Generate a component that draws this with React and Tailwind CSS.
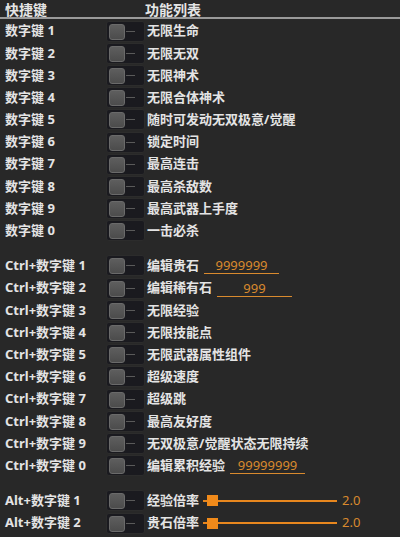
const groups = [
  [
    ["数字键 1", "无限生命"],
    ["数字键 2", "无限无双"],
    ["数字键 3", "无限神术"],
    ["数字键 4", "无限合体神术"],
    ["数字键 5", "随时可发动无双极意/觉醒"],
    ["数字键 6", "锁定时间"],
    ["数字键 7", "最高连击"],
    ["数字键 8", "最高杀敌数"],
    ["数字键 9", "最高武器上手度"],
    ["数字键 0", "一击必杀"],
  ],
  [
    ["Ctrl+数字键 1", "编辑贵石", { value: "9999999", width: "w-[75px]" }],
    ["Ctrl+数字键 2", "编辑稀有石", { value: "999", width: "w-[75px]" }],
    ["Ctrl+数字键 3", "无限经验"],
    ["Ctrl+数字键 4", "无限技能点"],
    ["Ctrl+数字键 5", "无限武器属性组件"],
    ["Ctrl+数字键 6", "超级速度"],
    ["Ctrl+数字键 7", "超级跳"],
    ["Ctrl+数字键 8", "最高友好度"],
    ["Ctrl+数字键 9", "无双极意/觉醒状态无限持续"],
    ["Ctrl+数字键 0", "编辑累积经验", { value: "99999999", width: "w-[75px]" }],
  ],
  [
    ["Alt+数字键 1", "经验倍率", null, "2.0"],
    ["Alt+数字键 2", "贵石倍率", null, "2.0"],
  ],
];

function Toggle() {
  return (
    <div className="relative w-[39px] h-[21px] rounded-[3px] bg-[#1a1a1f] border border-[#2c2c2c] shrink-0">
      <div className="absolute left-[2px] top-[2px] w-[16px] h-[16px] rounded-[3px] bg-gradient-to-b from-[#5e5e5e] to-[#4c4c4c] border border-[#6a6a6a]" />
      <div className="absolute left-[19px] top-[9px] w-[9px] h-[1px] bg-[#5a5a5a]" />
    </div>
  );
}

function Slider({ value }) {
  return (
    <div className="flex items-center ml-[4px]">
      <div className="relative w-[134px] h-[11px] flex items-center">
        <div className="w-full h-[2px] bg-[#e8871e]" />
        <div className="absolute left-[4px] top-0 w-[11px] h-[11px] bg-[#f08a1a]" />
      </div>
      <span className="ml-[5px] text-[#d98a2e] font-normal">{value}</span>
    </div>
  );
}

function Row({ keyName, label, edit, slider }) {
  return (
    <div className="flex items-center h-[22.2px]">
      <div className="w-[106px] pl-[5px] shrink-0">{keyName}</div>
      <Toggle />
      <div className="ml-[2px] whitespace-nowrap">{label}</div>
      {edit && (
        <div
          className={`ml-[5px] ${edit.width} h-[17px] border-b border-[#d98a2e] text-center text-[#d98a2e] font-normal leading-[16px]`}
        >
          {edit.value}
        </div>
      )}
      {slider && <Slider value={slider} />}
    </div>
  );
}

export default function App() {
  return (
    <div
      className="w-[400px] h-[537px] overflow-hidden bg-[#282828] text-[#e4e4e4] text-[13px] font-bold"
      style={{ fontFamily: '"Noto Sans", "Noto Sans CJK SC", sans-serif' }}
    >
      <div className="flex items-center h-[19px] border-b-2 border-[#9a9a9a] text-[14px] pt-[1px]">
        <div className="w-[145px] pl-[5px]">快捷键</div>
        <div>功能列表</div>
      </div>
      <div className="flex flex-col gap-[13px] pt-[1px]">
        {groups.map((rows, i) => (
          <div key={i} className="flex flex-col">
            {rows.map(([k, l, e, s]) => (
              <Row key={k} keyName={k} label={l} edit={e} slider={s} />
            ))}
          </div>
        ))}
      </div>
    </div>
  );
}
